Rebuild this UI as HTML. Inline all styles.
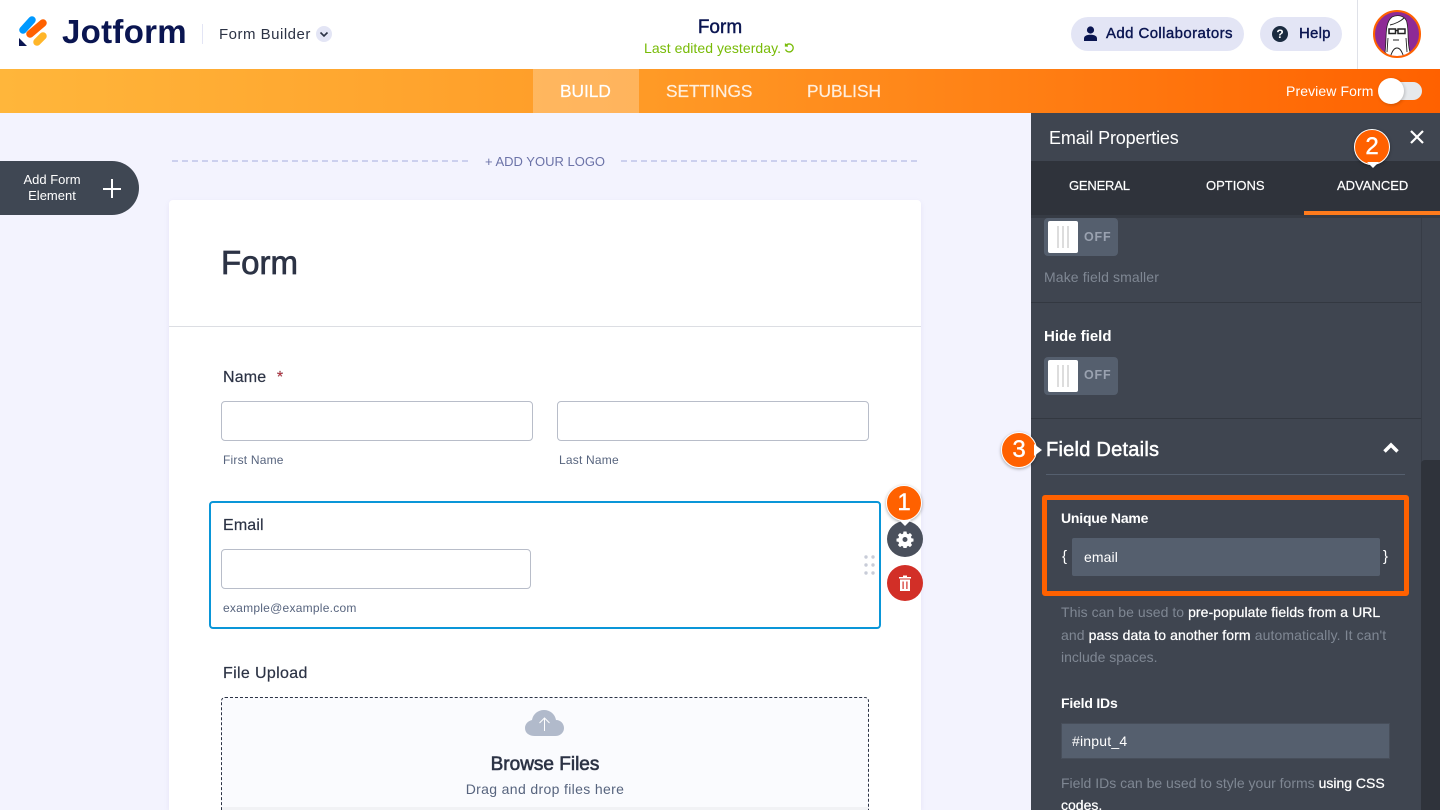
<!DOCTYPE html>
<html><head><meta charset="utf-8"><title>Form</title>
<style>
*{box-sizing:border-box}
html,body{margin:0;padding:0;width:1440px;height:810px;overflow:hidden;background:#f3f3fe;font-family:"Liberation Sans",sans-serif}
#root{position:absolute;left:0;top:0;width:1440px;height:810px;overflow:hidden}
.a{position:absolute;white-space:nowrap}
.inp{position:absolute;background:#fff;border:1px solid #b8bdc9;border-radius:4px}
.lab{position:absolute;white-space:nowrap;font-size:16px;color:#2c3345;-webkit-text-stroke:.2px #2c3345;letter-spacing:.15px}
.sub{position:absolute;white-space:nowrap;font-size:12px;color:#57647e;letter-spacing:.2px}
.tog{position:absolute;left:1044px;width:74px;height:38px;background:#555f6e;border-radius:4px}
.tog i{position:absolute;left:4px;top:3px;width:30px;height:32px;background:#fff;border-radius:2px}
.tog i:after{content:"";position:absolute;left:9px;top:5px;width:12px;height:22px;background:linear-gradient(90deg,#ddd 0 2px,transparent 2px 5px,#ddd 5px 7px,transparent 7px 10px,#ddd 10px 12px)}
.tog b{position:absolute;left:40px;top:11px;font-size:12.500px;letter-spacing:.8px;color:#9aa2b0}
.gr{color:#7f8793}.wh{color:#fff;font-weight:400;-webkit-text-stroke:.25px #fff}
.badge{position:absolute;width:36px;height:36px;border-radius:50%;background:#ff6100;border:1px solid #fff;box-shadow:0 1px 3px rgba(0,0,0,.35);color:#fff;font-size:24px;-webkit-text-stroke:.4px #fff;text-align:center;line-height:33px;z-index:5}
</style></head><body><div id="root">

<div class="a" style="left:0;top:0;width:1440px;height:69px;background:#fff"></div>
<svg class="a" style="left:0;top:0" width="60" height="60" viewBox="0 0 60 60">
<path d="M23 30L32 20" stroke="#0099ff" stroke-width="7.500" stroke-linecap="round"/>
<path d="M30 34L43 23" stroke="#ff6100" stroke-width="7.500" stroke-linecap="round"/>
<path d="M37 42L43 36" stroke="#ffb629" stroke-width="7.500" stroke-linecap="round"/>
<path d="M19 38L27 46H19Z" fill="#0a1551"/>
</svg>
<div class="a" style="left:62px;top:13px;font-size:33px;line-height:38px;font-weight:700;color:#0a1551;letter-spacing:.3px">Jotform</div>
<div class="a" style="left:202px;top:24px;width:1px;height:20px;background:#e3e5f5"></div>
<div class="a" style="left:219px;top:26px;font-size:15px;line-height:18px;color:#2c3345;letter-spacing:.5px">Form Builder</div>
<div class="a" style="left:316px;top:26px;width:16px;height:16px;border-radius:50%;background:#e3e5f5"></div>
<svg class="a" style="left:316px;top:26px" width="16" height="16"><path d="M4.500 6.500L8 10l3.500-3.500" fill="none" stroke="#2c3345" stroke-width="1.600"/></svg>

<div class="a" style="left:620px;width:200px;top:17px;text-align:center;font-size:19px;line-height:22px;color:#0a1551;-webkit-text-stroke:.4px #0a1551">Form</div>
<div class="a" style="left:644px;top:40px;font-size:14px;line-height:17px;color:#78bb07;letter-spacing:.05px">Last edited yesterday.</div>
<svg class="a" style="left:783px;top:42px" width="13" height="13" viewBox="0 0 13 13"><path d="M3 3.500A4 4 0 1 1 2.500 7.500M2.500 1.500v2.500H5" fill="none" stroke="#78bb07" stroke-width="1.300"/></svg>

<div class="a" style="left:1071px;top:17px;width:173px;height:34px;border-radius:17px;background:#e3e5f5"></div>
<svg class="a" style="left:1083px;top:26px" width="16" height="16" viewBox="0 0 16 16"><circle cx="7.500" cy="4" r="3.600" fill="#0a1551"/><path d="M1 15v-2.500C1 10 3.500 8.700 7.500 8.700s6.500 1.300 6.500 3.800V15z" fill="#0a1551"/></svg>
<div class="a" style="left:1106px;top:25px;font-size:15px;line-height:18px;color:#0a1551;-webkit-text-stroke:.4px #0a1551;letter-spacing:.4px">Add Collaborators</div>
<div class="a" style="left:1260px;top:17px;width:82px;height:34px;border-radius:17px;background:#e3e5f5"></div>
<div class="a" style="left:1272px;top:26px;width:16px;height:16px;border-radius:50%;background:#1b2b40;color:#fff;font-size:12px;line-height:16px;text-align:center;font-weight:700">?</div>
<div class="a" style="left:1299px;top:25px;font-size:15px;line-height:18px;color:#0a1551;-webkit-text-stroke:.4px #0a1551;letter-spacing:.2px">Help</div>
<div class="a" style="left:1357px;top:0;width:1px;height:69px;background:#dfe1e8"></div>
<svg class="a" style="left:1373px;top:10px" width="48" height="48" viewBox="0 0 48 48">
<circle cx="24" cy="24" r="23" fill="#8e2a96" stroke="#ff6100" stroke-width="2"/>
<clipPath id="c"><circle cx="24" cy="24" r="22"/></clipPath>
<g clip-path="url(#c)">
<path d="M12 42C14 30 11 13 19 7c6-3 14-1 15 6 2 9 0 20 3 29l-5 5H16z" fill="#fff" stroke="#222" stroke-width=".8"/>
<path d="M16 19h6.500v4.500H16zM25 19h7v4.500h-7zM22.500 20.500H25" fill="none" stroke="#222" stroke-width="1.500"/>
<path d="M17 15c5-1 11-4 14-7M20 30h6M15 28l-1 14M33 28l1 14M17 48c2-7 4-10 7-10s5 3 7 10" fill="none" stroke="#222" stroke-width=".9"/>
</g>
</svg>

<div class="a" style="left:0;top:69px;width:1440px;height:44px;background:linear-gradient(90deg,#ffb63b 0%,#ff9a26 45%,#ff6100 100%)"></div>
<div class="a" style="left:533px;top:69px;width:106px;height:44px;background:rgba(255,255,255,.25)"></div>
<div class="a" style="left:560px;top:80px;font-size:17.300px;line-height:22px;color:#fff;-webkit-text-stroke:.2px #fff">BUILD</div>
<div class="a" style="left:666px;top:80px;font-size:17.300px;line-height:22px;color:#fff;opacity:.85;-webkit-text-stroke:.2px #fff">SETTINGS</div>
<div class="a" style="left:807px;top:80px;font-size:17.300px;line-height:22px;color:#fff;opacity:.85;-webkit-text-stroke:.2px #fff">PUBLISH</div>
<div class="a" style="left:1286px;top:83px;font-size:14px;line-height:16px;color:#fff;letter-spacing:.1px">Preview Form</div>
<div class="a" style="left:1384px;top:82px;width:38px;height:18px;border-radius:9px;background:#e6e9ec"></div>
<div class="a" style="left:1378px;top:78px;width:26px;height:26px;border-radius:50%;background:#fff;box-shadow:1px 1px 3px rgba(0,0,0,.2)"></div>

<div class="a" style="left:0;top:161px;width:139px;height:54px;border-radius:0 27px 27px 0;background:#3f4753"></div>
<div class="a" style="left:0;top:172px;width:104px;text-align:center;font-size:13px;line-height:16px;color:#fff">Add Form<br>Element</div>
<div class="a" style="left:103px;top:188px;width:18px;height:2px;background:#fff"></div>
<div class="a" style="left:111px;top:179px;width:2px;height:19px;background:#fff"></div>

<div class="a" style="left:172px;top:160px;width:296px;height:0;border-top:2px dashed #ccd0ee"></div>
<div class="a" style="left:621px;top:160px;width:296px;height:0;border-top:2px dashed #ccd0ee"></div>
<div class="a" style="left:485px;top:153px;font-size:13px;line-height:17px;color:#6c73a8">+ ADD YOUR LOGO</div>

<div class="a" style="left:169px;top:200px;width:752px;height:610px;background:#fff;border-radius:4px 4px 0 0;box-shadow:0 2px 6px rgba(86,70,165,.08)"></div>
<div class="a" style="left:221px;top:244px;font-size:33px;line-height:38px;color:#2c3345;-webkit-text-stroke:.7px #2c3345">Form</div>
<div class="a" style="left:169px;top:326px;width:752px;height:1px;background:#dcdee3"></div>

<div class="lab" style="left:223px;top:369px">Name <span style="color:#e0323c;margin-left:6px">*</span></div>
<div class="inp" style="left:221px;top:401px;width:312px;height:40px"></div>
<div class="inp" style="left:557px;top:401px;width:312px;height:40px"></div>
<div class="sub" style="left:223px;top:453px">First Name</div>
<div class="sub" style="left:559px;top:453px">Last Name</div>

<div class="a" style="left:209px;top:501px;width:672px;height:128px;border:2px solid #0a96d8;border-radius:4px"></div>
<div class="lab" style="left:223px;top:517px">Email</div>
<div class="inp" style="left:221px;top:549px;width:310px;height:40px"></div>
<div class="sub" style="left:223px;top:601px;letter-spacing:.25px">example@example.com</div>
<svg class="a" style="left:863px;top:554px" width="12" height="22"><g fill="#c8ccd8"><circle cx="3" cy="3" r="1.700"/><circle cx="10" cy="3" r="1.700"/><circle cx="3" cy="11" r="1.700"/><circle cx="10" cy="11" r="1.700"/><circle cx="3" cy="19" r="1.700"/><circle cx="10" cy="19" r="1.700"/></g></svg>

<div class="a" style="left:887px;top:521px;width:36px;height:36px;border-radius:50%;background:#4a505c"></div>
<svg class="a" style="left:896px;top:530px" width="18" height="18" viewBox="0 0 18 18"><path fill="#fff" fill-rule="evenodd" d="M7.500 1.500h3l.4 2.100 1.300.6 1.800-1.200 2.100 2.100-1.200 1.800.6 1.300 2 .4v2.900l-2 .4-.6 1.300 1.200 1.800-2.100 2.100-1.800-1.200-1.300.6-.4 2h-3l-.4-2-1.300-.6-1.800 1.200-2.100-2.100 1.200-1.800-.6-1.300-2-.4V8.600l2-.4.600-1.300-1.200-1.800 2.100-2.100 1.800 1.200 1.300-.6zM9 7a2.500 2.500 0 1 0 0 5 2.500 2.500 0 0 0 0-5z"/></svg>
<div class="a" style="left:887px;top:565px;width:36px;height:36px;border-radius:50%;background:#d22f27"></div>
<svg class="a" style="left:898px;top:574px" width="14" height="18" viewBox="0 0 14 18"><path fill="#fff" d="M1 3h4V1.500h4V3h4v1.500H1zM2 5.500h10V17H2zM4.500 7.500v7.500h1.200V7.500zM8.300 7.500v7.500h1.200V7.500z" fill-rule="evenodd"/></svg>

<svg class="a" style="left:884px;top:484px;z-index:6" width="42" height="44"><path d="M15 36l6 6 6-6z" fill="#fff"/></svg>
<div class="badge" style="left:886px;top:485px">1</div>

<div class="lab" style="left:223px;top:665px;letter-spacing:.35px">File Upload</div>
<div class="a" style="left:221px;top:697px;width:648px;height:113px;border:1px dashed #2c3345;border-bottom:0;border-radius:4px 4px 0 0;background:#fafbfe"></div>
<div class="a" style="left:222px;top:807px;width:646px;height:3px;background:#f1f2f5"></div>
<svg class="a" style="left:524px;top:708px" width="42" height="30" viewBox="0 0 42 30"><path fill="#b1bacb" d="M11 28C5 28 1 25 1 20c0-4 3-7 7-8C9 6 14 2 20 2s11 4 12 10c5 0 8 4 8 8s-3 8-9 8z"/><path d="M20.500 23V10M15.500 15l5-5 5 5" fill="none" stroke="#fff" stroke-width="1"/></svg>
<div class="a" style="left:221px;width:648px;top:754px;text-align:center;font-size:19px;line-height:22px;color:#2c3345;-webkit-text-stroke:.6px #2c3345">Browse Files</div>
<div class="a" style="left:221px;width:648px;top:781px;text-align:center;font-size:14px;line-height:17px;color:#57647e;letter-spacing:.35px">Drag and drop files here</div>

<!-- panel -->
<div class="a" style="left:1031px;top:113px;width:409px;height:697px;background:#3f4550"></div>
<div class="a" style="left:1049px;top:127px;font-size:18px;line-height:22px;color:#fff;letter-spacing:-.15px">Email Properties</div>
<svg class="a" style="left:1409px;top:129px" width="16" height="16"><path d="M2 2l12 12M14 2L2 14" stroke="#fff" stroke-width="2.200"/></svg>
<div class="a" style="left:1031px;top:161px;width:409px;height:54px;background:#2f333b"></div>
<div class="a" style="left:1031px;top:215px;width:409px;height:3px;background:#363b44"></div>
<div class="a" style="left:1304px;top:211px;width:136px;height:4px;background:#ff7b1c"></div>
<div class="a" style="left:1069px;top:178px;font-size:13px;line-height:16px;color:#fff;letter-spacing:-.2px;-webkit-text-stroke:.2px #fff">GENERAL</div>
<div class="a" style="left:1206px;top:178px;font-size:13px;line-height:16px;color:#fff;-webkit-text-stroke:.2px #fff">OPTIONS</div>
<div class="a" style="left:1337px;top:178px;font-size:13px;line-height:16px;color:#fff;-webkit-text-stroke:.2px #fff">ADVANCED</div>
<svg class="a" style="left:1352px;top:126px;z-index:6" width="42" height="46"><path d="M15 36l6 6 6-6z" fill="#fff"/></svg>
<div class="badge" style="left:1354px;top:129px">2</div>

<div class="a" style="left:1421px;top:218px;width:1px;height:592px;background:#373c46"></div>
<div class="a" style="left:1421px;top:460px;width:19px;height:350px;background:#2f333b;border-radius:4px 0 0 0"></div>

<div class="tog" style="top:218px"><i></i><b style="top:12px">OFF</b></div>
<div class="a" style="left:1044px;top:269px;font-size:14px;line-height:17px;color:#7f8793;letter-spacing:.12px">Make field smaller</div>
<div class="a" style="left:1031px;top:302px;width:390px;height:1px;background:#333841"></div>
<div class="a" style="left:1044px;top:328px;font-size:15px;line-height:17px;color:#fff;font-weight:700">Hide field</div>
<div class="tog" style="top:357px"><i></i><b>OFF</b></div>
<div class="a" style="left:1031px;top:418px;width:390px;height:1px;background:#333841"></div>

<div class="a" style="left:1046px;top:438px;font-size:20px;line-height:24px;color:#fff;-webkit-text-stroke:.5px #fff;letter-spacing:.25px">Field Details</div>
<svg class="a" style="left:1382px;top:441px" width="18" height="14"><path d="M2.500 10.500L9 4l6.500 6.500" fill="none" stroke="#fff" stroke-width="3.500"/></svg>
<div class="a" style="left:1046px;top:474px;width:359px;height:1px;background:#555f6e"></div>
<svg class="a" style="left:1034px;top:442px;z-index:6" width="12" height="16"><path d="M0 2l8 6-8 6z" fill="#fff"/></svg>
<div class="badge" style="left:1001px;top:432px">3</div>

<div class="a" style="left:1042px;top:495px;width:367px;height:101px;border:5px solid #ff6100;border-radius:3px"></div>
<div class="a" style="left:1061px;top:510px;font-size:14px;line-height:17px;color:#fff;font-weight:700;letter-spacing:-.2px">Unique Name</div>
<div class="a" style="left:1062px;top:548px;font-size:15px;line-height:18px;color:#fff">{</div>
<div class="a" style="left:1072px;top:538px;width:308px;height:38px;background:#555f6e;border-radius:2px"></div>
<div class="a" style="left:1084px;top:549px;font-size:14px;line-height:17px;color:#fff;letter-spacing:.1px">email</div>
<div class="a" style="left:1383px;top:548px;font-size:15px;line-height:18px;color:#fff">}</div>

<div class="a gr" style="left:1061px;top:604px;font-size:14px;line-height:17px;letter-spacing:.05px">This can be used to <span class="wh">pre-populate fields from a URL</span></div>
<div class="a gr" style="left:1061px;top:627px;font-size:14px;line-height:17px;letter-spacing:.1px">and <span class="wh">pass data to another form</span> automatically. It can't</div>
<div class="a gr" style="left:1061px;top:649px;font-size:14px;line-height:17px">include spaces.</div>
<div class="a" style="left:1061px;top:695px;font-size:14px;line-height:17px;color:#fff;font-weight:700;letter-spacing:-.2px">Field IDs</div>
<div class="a" style="left:1061px;top:723px;width:329px;height:36px;background:#555f6e;border:1px solid #474e5a"></div>
<div class="a" style="left:1072px;top:733px;font-size:14px;line-height:17px;color:#fff;letter-spacing:.2px">#input_4</div>
<div class="a gr" style="left:1061px;top:775px;font-size:14px;line-height:17px">Field IDs can be used to style your forms <span class="wh">using CSS</span></div>
<div class="a wh" style="left:1061px;top:797px;font-size:14px;line-height:17px">codes.</div>

</div></body></html>
